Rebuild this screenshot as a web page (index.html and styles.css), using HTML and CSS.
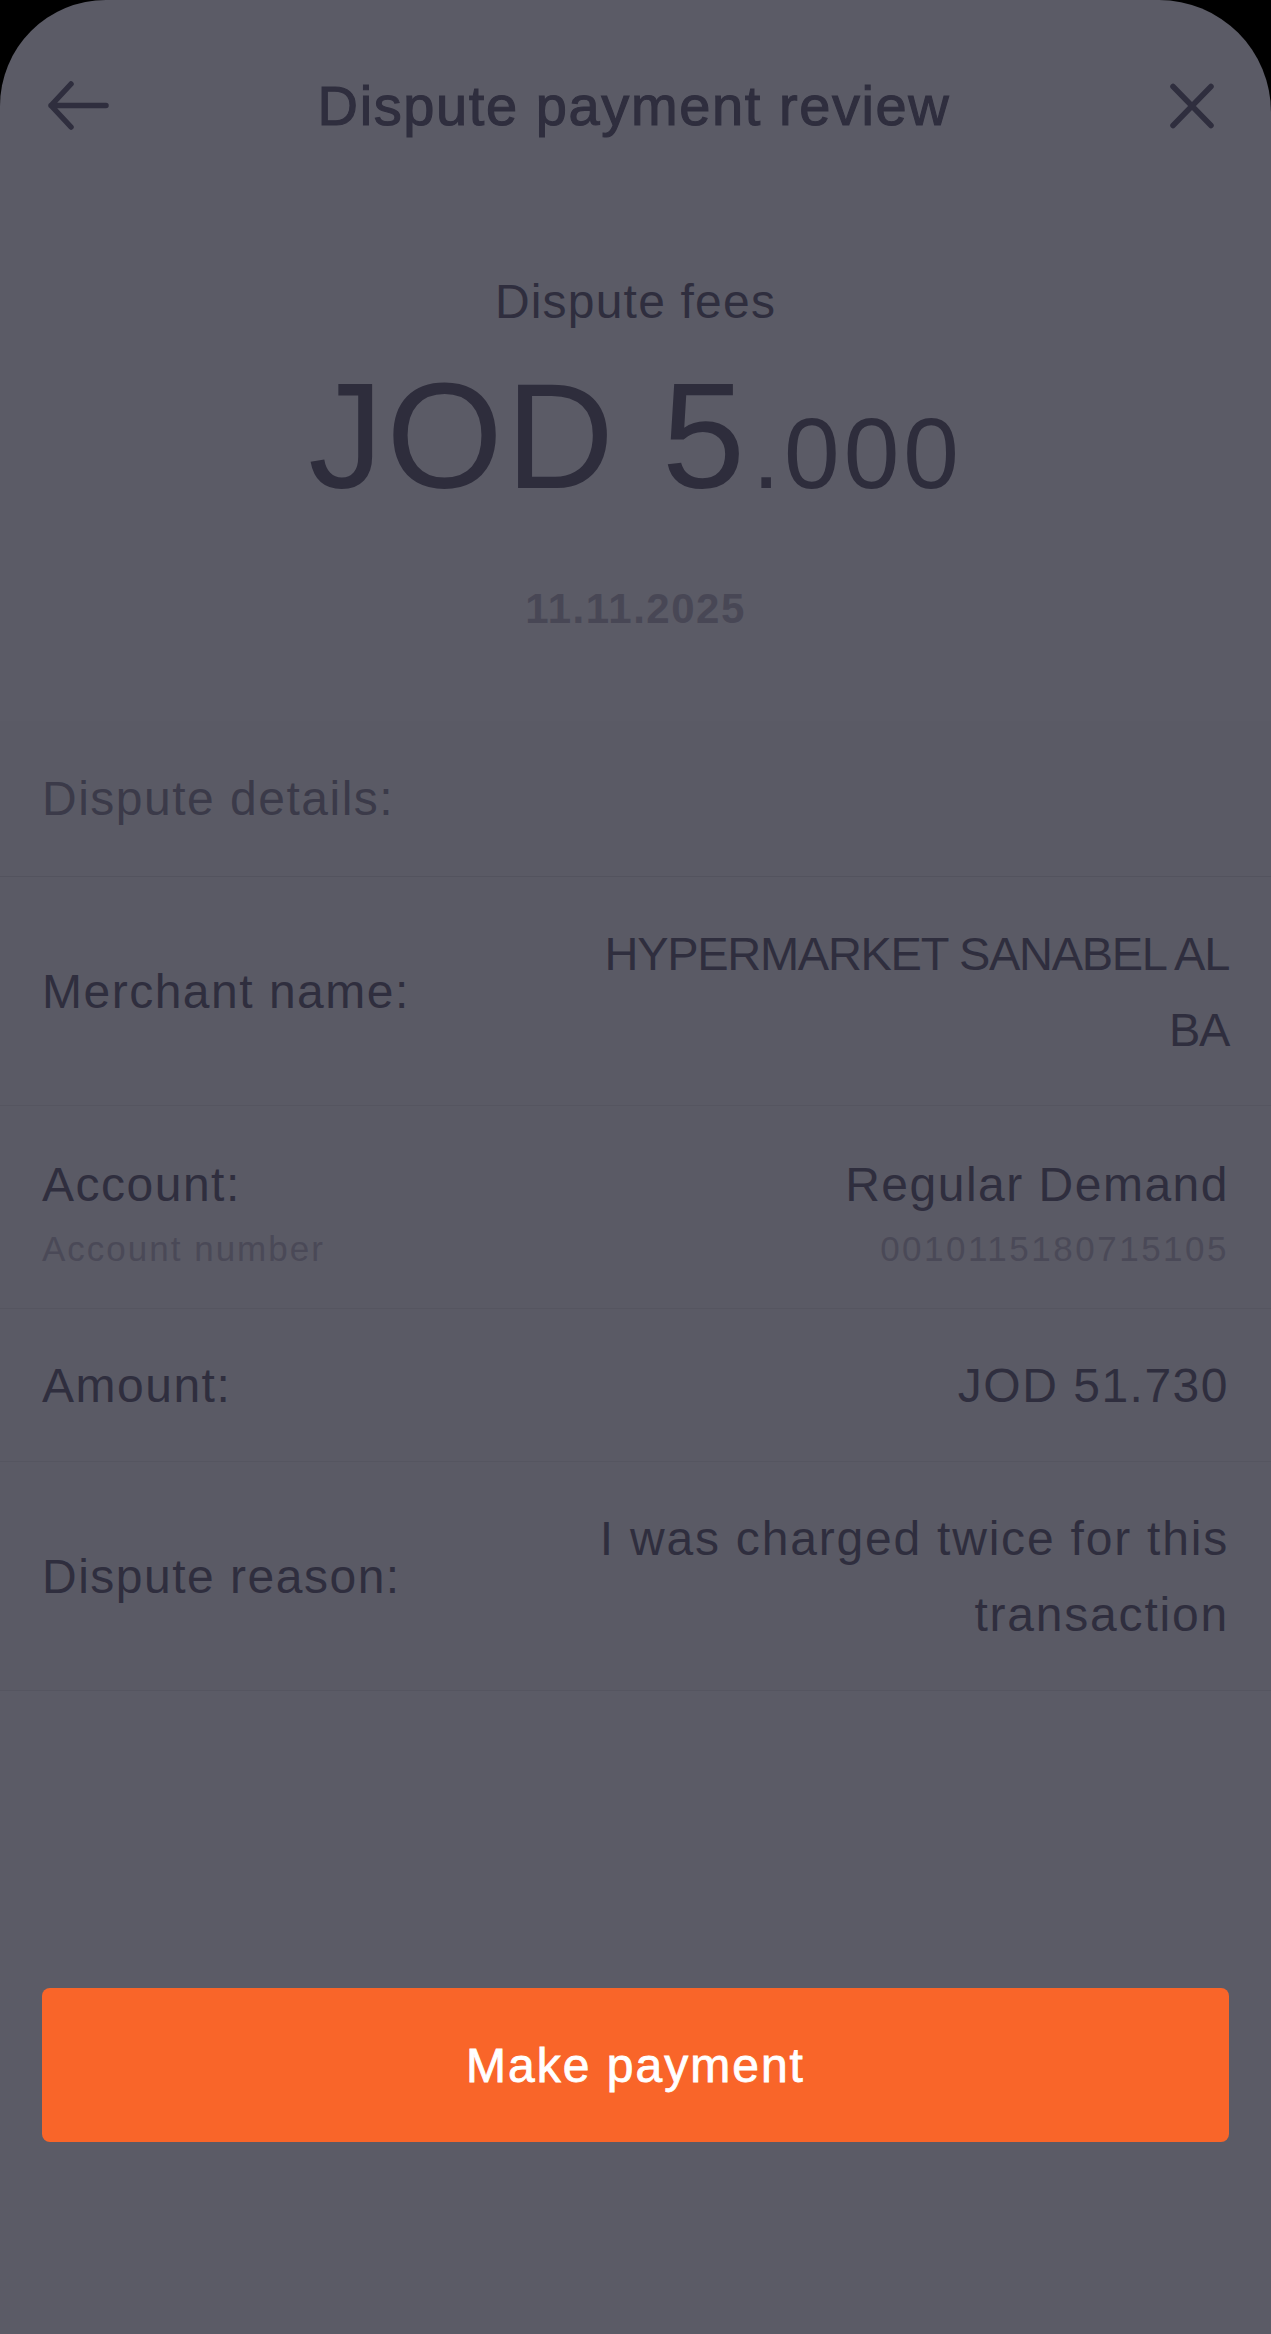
FILE: index.html
```html
<!DOCTYPE html>
<html lang="en">
<head>
<meta charset="utf-8">
<title>Dispute payment review</title>
<link rel="stylesheet" href="styles.css">
</head>
<body>
<div class="screen">
  <header class="topbar">
    <button class="icon-btn back" aria-label="Back">
      <svg viewBox="0 0 72 72" width="72" height="72"><path d="M31 14 L11 35.5 L31 57 M11 35.5 H66" fill="none" stroke="currentColor" stroke-width="5.5" stroke-linecap="round" stroke-linejoin="round"/></svg>
    </button>
    <h1 class="title">Dispute payment review</h1>
    <button class="icon-btn close" aria-label="Close">
      <svg viewBox="0 0 72 72" width="72" height="72"><path d="M17 16.5 L55 55.5 M55 16.5 L17 55.5" fill="none" stroke="currentColor" stroke-width="5.5" stroke-linecap="round"/></svg>
    </button>
  </header>

  <section class="summary">
    <p class="fee-label">Dispute fees</p>
    <p class="fee-amount">JOD 5<span class="decimals">.000</span></p>
    <p class="fee-date">11.11.2025</p>
  </section>

  <section class="details">
    <div class="details-head">Dispute details:</div>
    <div class="row">
      <div class="label">Merchant name:</div>
      <div class="value caps">HYPERMARKET SANABEL AL BA</div>
    </div>
    <div class="row row-top">
      <div class="label-group">
        <div class="label">Account:</div>
        <div class="sub">Account number</div>
      </div>
      <div class="value-group">
        <div class="value">Regular Demand</div>
        <div class="sub">0010115180715105</div>
      </div>
    </div>
    <div class="row">
      <div class="label">Amount:</div>
      <div class="value">JOD 51.730</div>
    </div>
    <div class="row">
      <div class="label">Dispute reason:</div>
      <div class="value reason">I was charged twice for this transaction</div>
    </div>
  </section>

  <div class="footer">
    <button class="pay-btn">Make payment</button>
  </div>
</div>
</body>
</html>
```

FILE: styles.css
```css
* { box-sizing: border-box; }

html, body {
  margin: 0;
  padding: 0;
  background: #000;
}

body {
  font-family: "Liberation Sans", Arial, sans-serif;
  color: #2f2e3e;
}

p { margin: 0; }

.screen {
  width: 1271px;
  min-height: 2334px;
  background: #5b5b66;
  border-radius: 106px 112px 0 0;
  display: flex;
  flex-direction: column;
}

/* Top bar */
.topbar {
  height: 212px;
  display: flex;
  align-items: center;
  padding: 0 43px 0 40px;
}

.icon-btn {
  width: 72px;
  height: 72px;
  padding: 0;
  border: 0;
  background: none;
  color: #2f2e3e;
  display: flex;
  align-items: center;
  justify-content: center;
  flex: none;
}

.icon-btn svg { display: block; }

.title {
  flex: 1;
  margin: 0;
  text-align: center;
  font-size: 56px;
  font-weight: 400;
  letter-spacing: 1.6px;
  -webkit-text-stroke: 1.1px #2f2e3e;
  color: #2f2e3e;
  line-height: 72px;
}

/* Summary */
.summary {
  text-align: center;
  display: flex;
  flex-direction: column;
  align-items: center;
}

.fee-label {
  margin-top: 60px;
  font-size: 48px;
  line-height: 60px;
  letter-spacing: 1.2px;
  color: #2f2e3e;
}

.fee-amount {
  margin-top: 29px;
  font-size: 150px;
  line-height: 150px;
  letter-spacing: 3px;
  color: #2e2d3c;
}

.decimals {
  font-size: 100px;
  letter-spacing: 4px;
  padding-left: 4px;
}

.fee-date {
  margin-top: 56px;
  font-size: 42px;
  line-height: 50px;
  font-weight: 700;
  letter-spacing: 1.5px;
  color: #484755;
}

/* Details */
.details {
  margin-top: 87px;
  background: #5a5a65;
}

.details-head {
  height: 156px;
  display: flex;
  align-items: center;
  padding: 0 42px;
  font-size: 48px;
  line-height: 60px;
  letter-spacing: 1.5px;
  color: #3b3a49;
  border-bottom: 1px solid #53535e;
}

.row {
  display: grid;
  grid-template-columns: 1fr 650px;
  align-items: center;
  padding: 39px 42px 37px;
  border-bottom: 1px solid #555560;
  font-size: 48px;
  letter-spacing: 1.5px;
}

.row-top {
  align-items: start;
  padding: 49px 42px 37px;
}

.label {
  line-height: 60px;
  color: #2f2e3e;
}

.value {
  text-align: right;
  line-height: 76px;
  color: #2f2e3e;
}

.row-top .value { line-height: 60px; }

.value.caps {
  font-size: 47px;
  letter-spacing: -1.3px;
}

.value.reason {
  letter-spacing: 1.8px;
}

.value-group { text-align: right; }

.sub {
  margin-top: 12px;
  font-size: 35px;
  line-height: 44px;
  letter-spacing: 2px;
  color: #4a4957;
}

.value-group .sub { letter-spacing: 2.5px; }

/* Footer */
.footer {
  padding: 297px 42px 0;
}

.pay-btn {
  width: 100%;
  height: 154px;
  border: 0;
  border-radius: 8px;
  background: #f96529;
  color: #fff;
  font-family: "Liberation Sans", Arial, sans-serif;
  font-size: 48px;
  letter-spacing: 2px;
  -webkit-text-stroke: 0.8px #fff;
  display: flex;
  align-items: center;
  justify-content: center;
}
```
